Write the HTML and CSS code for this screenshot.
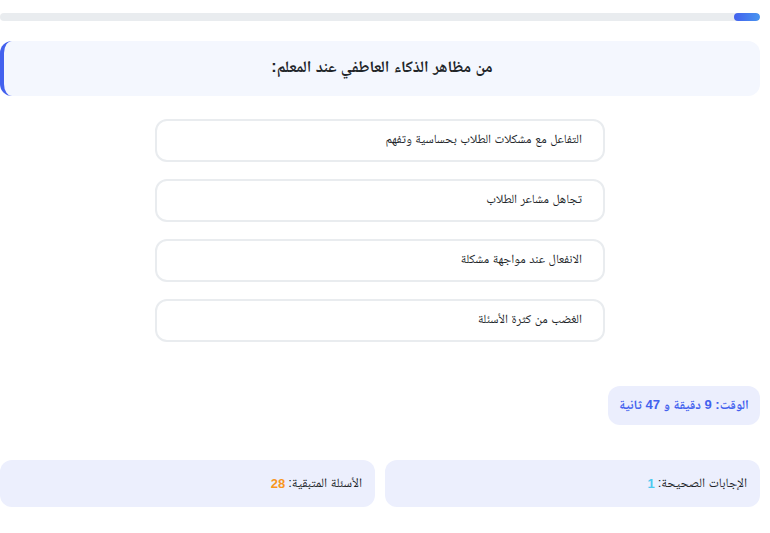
FILE: index.html
```html
<!DOCTYPE html>
<html lang="ar" dir="rtl">
<head>
<meta charset="utf-8">
<link rel="stylesheet" href="styles.css">
</head>
<body>
<div class="app">
  <div class="progress"><div class="progress-fill"></div></div>
  <div class="question">من مظاهر الذكاء العاطفي عند المعلم:</div>
  <div class="options">
    <div class="option">التفاعل مع مشكلات الطلاب بحساسية وتفهم</div>
    <div class="option">تجاهل مشاعر الطلاب</div>
    <div class="option">الانفعال عند مواجهة مشكلة</div>
    <div class="option">الغضب من كثرة الأسئلة</div>
  </div>
  <div class="timer-row"><div class="timer">الوقت: 9 دقيقة و 47 ثانية</div></div>
  <div class="stats">
    <div class="stat">الإجابات الصحيحة: <span class="correct">1</span></div>
    <div class="stat">الأسئلة المتبقية: <span class="remaining">28</span></div>
  </div>
</div>
</body>
</html>
```
FILE: styles.css
```css
* { box-sizing: border-box; }
html, body { margin: 0; padding: 0; background: #fff; }
body { font-family: "Liberation Sans", "Noto Naskh Arabic", "Noto Sans Arabic", "DejaVu Sans", sans-serif; color: #222; }
.app { width: 760px; margin-right: 10px; margin-left: 0; padding-top: 13px; }
.progress { height: 8px; background: #e9ecef; border-radius: 4px; overflow: hidden; }
.progress-fill { width: 26px; height: 100%; border-radius: 4px; background: linear-gradient(to left, #4895ef, #4361ee); }
.question {
  margin-top: 20px; height: 55px; background: #f4f7fe; border-radius: 12px;
  border-left: 4px solid #4361ee; display: flex; align-items: center; justify-content: center;
  font-size: 16px; font-weight: bold; color: #212529;
}
.options { margin: 23px auto 0; width: 450px; display: flex; flex-direction: column; gap: 17px; }
.option {
  height: 43px; border: 2px solid #e9ecef; border-radius: 12px; display: flex; align-items: center;
  padding-right: 21px; font-size: 12.5px; color: #212529; background: #fff;
}
.timer-row { display: flex; justify-content: flex-start; margin-top: 44px; }
.timer {
  width: 152px; height: 39px; background: #ebeefd; border-radius: 12px; display: flex; align-items: center;
  justify-content: center; color: #4361ee; font-weight: bold; font-size: 13px;
}
.stats { display: grid; grid-template-columns: 1fr 1fr; gap: 10px; margin-top: 35px; }
.stat {
  height: 47px; background: #eceffd; border-radius: 12px; display: flex; align-items: center;
  padding-right: 13px; font-size: 13px; color: #212529;
}
.correct { color: #4cc9f0; font-weight: bold; margin-right: 3px; }
.remaining { color: #f8961e; font-weight: bold; margin-right: 3px; }
```
